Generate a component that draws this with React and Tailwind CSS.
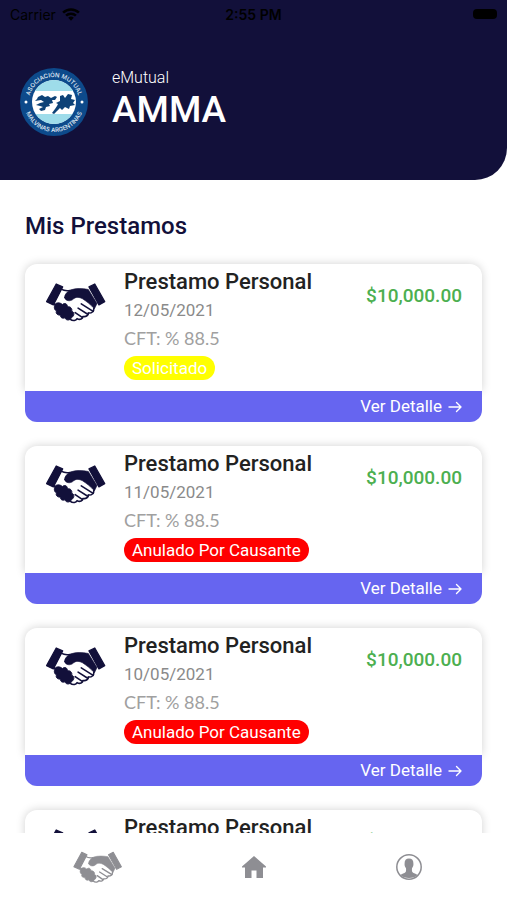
import { useState } from 'react';
import clsx from 'clsx';

const loans = [
  { id: 1, title: 'Prestamo Personal', date: '12/05/2021', cft: '88.5', amount: '$10,000.00', status: 'Solicitado' },
  { id: 2, title: 'Prestamo Personal', date: '11/05/2021', cft: '88.5', amount: '$10,000.00', status: 'Anulado Por Causante' },
  { id: 3, title: 'Prestamo Personal', date: '10/05/2021', cft: '88.5', amount: '$10,000.00', status: 'Anulado Por Causante' },
  { id: 4, title: 'Prestamo Personal', date: '09/05/2021', cft: '88.5', amount: '$10,000.00', status: 'Anulado Por Causante' },
];

const statusColors = {
  Solicitado: 'bg-[#ffff00] text-white',
  'Anulado Por Causante': 'bg-[#ff0000] text-white',
};

const Handshake = ({ className }) => (
  <svg viewBox="22 36 190 122" className={className} fill="currentColor" stroke="currentColor" strokeLinecap="round" strokeLinejoin="round" aria-hidden="true">
    {/* cuffs */}
    <g strokeWidth="4">
      <path d="M57 41 L77 50 L48 106 L27 96 Z" />
      <path d="M159 50 L177 41 L208 96 L190 106 Z" />
    </g>
    {/* upper hand with its thumb */}
    <path strokeWidth="2" d="M83 83 C83 73 92 64 103 59 C118 54 138 54 157 58 L184 102 L176 118 C165 106 150 94 139 87 C128 81 117 81 110 88 C102 96 85 95 83 83 Z" />
    {/* knuckles of the lower hand */}
    <path strokeWidth="3" d="M56 102 C62 97 71 100 76 105 C84 98 92 103 92 112 C101 110 108 118 105 126 C113 127 114 138 108 143 L100 151 C93 156 85 151 84 146 C76 150 68 144 71 138 C61 139 54 132 58 125 C49 121 49 109 56 102 Z" />
    {/* outlines and finger gaps */}
    <g fill="none" strokeWidth="5">
      <path d="M72 57 C81 62 90 63 100 61" />
      <path d="M47 98 L57 110" />
      <path d="M100 150 C110 158 119 154 122 149 C131 154 140 149 140 142 C150 144 158 138 157 131 C167 133 175 126 174 117" />
      <path d="M116 130 L138 145" />
      <path d="M125 116 L155 135" />
      <path d="M135 103 L172 126" />
    </g>
  </svg>
);

const Logo = () => (
  <svg viewBox="0 0 68 68" className="size-17 shrink-0" role="img" aria-label="Asociación Mutual Malvinas Argentinas">
    <defs>
      <path id="arc-top" d="M9 34 A25 25 0 0 1 59 34" />
      <path id="arc-bottom" d="M4 34 A30 30 0 0 0 64 34" />
      <clipPath id="flag">
        <circle cx="34" cy="34" r="22" />
      </clipPath>
    </defs>
    <circle cx="34" cy="34" r="34" fill="#0d4a8b" />
    <g clipPath="url(#flag)">
      <rect x="12" y="12" width="44" height="44" fill="#fff" />
      <rect x="12" y="12" width="44" height="11" fill="#9edcea" />
      <rect x="12" y="46" width="44" height="10" fill="#9edcea" />
    </g>
    <g fill="#0d4277">
      <path d="M18 29 L22 27 L25 29 L28 28 L31 30 L35 28 L37 29 L35 32 L32 32 L33 35 L29 36 L30 38 L26 39 L25 42 L21 43 L19 41 L23 39 L20 38 L16 37 L20 35 L24 34 L21 32 L15 33 L17 31 Z" />
      <path d="M40 28 L43 27 L45 30 L48 26 L52 27 L51 31 L55 32 L53 35 L55 37 L50 38 L49 41 L45 39 L42 42 L40 40 L37 43 L34 46 L32 45 L35 41 L37 38 L38 36 L36 35 L40 33 Z" />
    </g>
    <circle cx="6" cy="34" r="1.5" fill="#fff" />
    <circle cx="62" cy="34" r="1.5" fill="#fff" />
    <g fill="#e4eef6" fontFamily="Inter, sans-serif" fontSize="6" fontWeight="500" textAnchor="middle">
      <text><textPath href="#arc-top" startOffset="50%">ASOCIACIÓN MUTUAL</textPath></text>
      <text><textPath href="#arc-bottom" startOffset="50%">MALVINAS ARGENTINAS</textPath></text>
    </g>
  </svg>
);

const WifiIcon = () => (
  <svg viewBox="0 0 18 13" className="w-[18px] h-[13px]" fill="currentColor" aria-hidden="true">
    <path d="M9 12.8 L6.2 9.8 A4.1 4.1 0 0 1 11.8 9.8 Z" />
    <path d="M3.2 6.8 A8.4 8.4 0 0 1 14.8 6.8 L13 8.6 A5.8 5.8 0 0 0 5 8.6 Z" />
    <path d="M0.2 3.8 A12.7 12.7 0 0 1 17.8 3.8 L16 5.6 A10.1 10.1 0 0 0 2 5.6 Z" />
  </svg>
);

const ArrowIcon = () => (
  <svg viewBox="0 0 14 12" className="w-3.5 h-3" fill="none" stroke="currentColor" strokeWidth="1.4" strokeLinecap="round" strokeLinejoin="round" aria-hidden="true">
    <path d="M1 6 H13 M8.5 1.5 L13 6 L8.5 10.5" />
  </svg>
);

const HomeIcon = () => (
  <svg viewBox="0 0 26 22" className="w-[26px] h-[22px]" fill="currentColor" aria-hidden="true">
    <path d="M13 0 L25 10.5 V11.5 H22 V22 H15.5 V14.5 H10.5 V22 H4 V11.5 H1 V10.5 Z" />
  </svg>
);

const ProfileIcon = () => (
  <svg viewBox="0 0 26 26" className="size-[26px]" aria-hidden="true">
    <circle cx="13" cy="13" r="12.2" fill="none" stroke="currentColor" strokeWidth="1.5" />
    <path fill="currentColor" d="M13 4.5 C16 4.5 17.6 6.4 17.4 9.5 C17.7 11.5 16.8 13 16 14.2 C15.7 17 16 18.2 17.5 19 C19.5 19.8 20.8 20.2 21.4 21 C18.5 25 7.5 25 4.6 21 C5.2 20.2 6.5 19.8 8.5 19 C10 18.2 10.3 17 10 14.2 C9.2 13 8.3 11.5 8.6 9.5 C8.4 6.4 10 4.5 13 4.5 Z" />
  </svg>
);

const Header = () => (
  <header className="bg-[#12103a] rounded-br-[32px] shrink-0 pb-11">
    <div className="grid grid-cols-3 items-center h-7 px-2.5 text-black font-[Inter,sans-serif] text-[14px]">
      <div className="flex items-center gap-1.5">
        <span>Carrier</span>
        <WifiIcon />
      </div>
      <span className="text-center font-semibold">2:55 PM</span>
      <span className="justify-self-end w-6 h-2.5 rounded-sm bg-black" />
    </div>
    <div className="flex items-start gap-6 pl-5 pt-10">
      <Logo />
      <div className="text-white">
        <p className="text-[16px] leading-5 font-light">eMutual</p>
        <h1 className="text-[37px] leading-11 font-medium">AMMA</h1>
      </div>
    </div>
  </header>
);

const LoanCard = ({ loan }) => (
  <article>
    <div className="flex items-start rounded-t-xl bg-white pt-1 pb-[11px] px-5 shadow-[0_0_10px_rgba(0,0,0,0.18)]">
      <Handshake className="w-[61px] h-10 mt-3.5 shrink-0 text-[#12103a]" />
      <div className="flex-1 min-w-0 pl-[18px]">
        <h3 className="text-[22px] leading-7 font-medium text-[#222222] whitespace-nowrap">{loan.title}</h3>
        <p className="text-[17px] leading-7 text-[#8a8a8a]">{loan.date}</p>
        <p className="text-[18px] leading-7 text-[#a0a0a0] font-[Lato,sans-serif]">CFT: % {loan.cft}</p>
        <span className={clsx('block w-fit mt-1 px-2 rounded-full text-[17px] leading-6', statusColors[loan.status])}>
          {loan.status}
        </span>
      </div>
      <p className="mt-3.5 text-[19px] leading-7 font-medium text-[#4caf50]">{loan.amount}</p>
    </div>
    <button className="flex w-full items-center justify-end gap-1.5 h-[31px] pr-5 rounded-b-xl bg-[#6665f0] text-white text-[17px]">
      Ver Detalle
      <ArrowIcon />
    </button>
  </article>
);

const tabs = [
  { id: 'loans', label: 'Prestamos', icon: <Handshake className="w-[51px] h-8" /> },
  { id: 'home', label: 'Inicio', icon: <HomeIcon /> },
  { id: 'profile', label: 'Perfil', icon: <ProfileIcon /> },
];

const App = () => {
  const [activeTab, setActiveTab] = useState('loans');

  return (
    <div className="flex flex-col h-screen bg-white font-[Roboto,sans-serif]">
      <Header />
      <main className="flex-1 min-h-0 overflow-hidden px-[25px] pt-7">
        <h2 className="text-[24px] leading-9 font-medium text-[#12103a]">Mis Prestamos</h2>
        <div className="flex flex-col gap-6 pt-5">
          {loans.map((loan) => (
            <LoanCard key={loan.id} loan={loan} />
          ))}
        </div>
      </main>
      <nav className="flex shrink-0 justify-around h-[67px] bg-white px-5 text-[#8e8e93]">
        {tabs.map((tab) => (
          <button
            key={tab.id}
            aria-label={tab.label}
            aria-current={activeTab === tab.id ? 'page' : undefined}
            onClick={() => setActiveTab(tab.id)}
            className="flex flex-1 items-center justify-center"
          >
            {tab.icon}
          </button>
        ))}
      </nav>
    </div>
  );
};

export default App;
